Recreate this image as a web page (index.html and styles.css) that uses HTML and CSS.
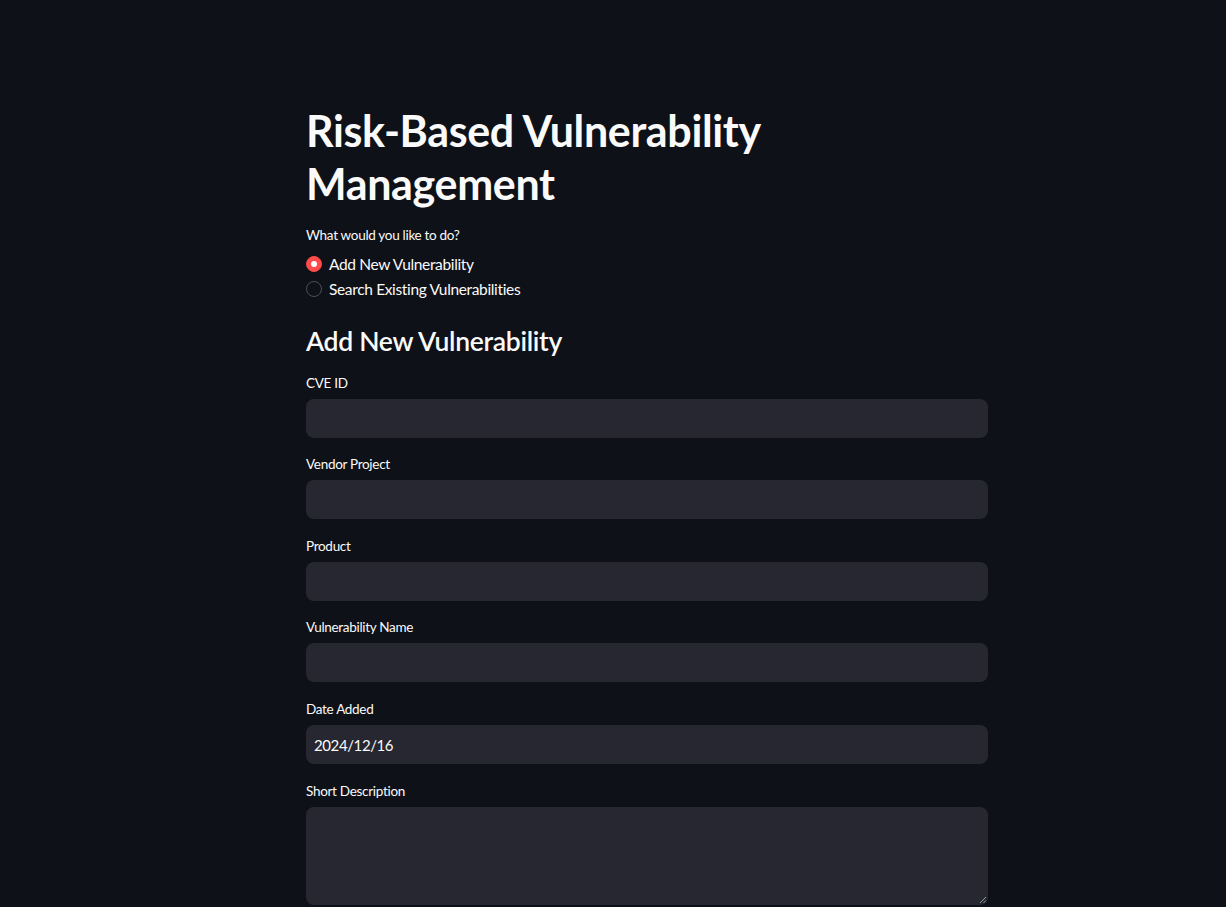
FILE: index.html
```html
<!DOCTYPE html>
<html lang="en">
<head>
<meta charset="utf-8">
<title>Risk-Based Vulnerability Management</title>
<link rel="stylesheet" href="styles.css">
</head>
<body>
<main class="app">
  <div class="block">
    <h1 class="title">Risk-Based Vulnerability Management</h1>

    <div class="radio-widget">
      <div class="label">What would you like to do?</div>
      <div class="radio-group">
        <label class="radio-option">
          <span class="radio-dot checked"></span>
          <span class="radio-text">Add New Vulnerability</span>
        </label>
        <label class="radio-option">
          <span class="radio-dot"></span>
          <span class="radio-text">Search Existing Vulnerabilities</span>
        </label>
      </div>
    </div>

    <h2 class="header">Add New Vulnerability</h2>

    <div class="field">
      <div class="label">CVE ID</div>
      <div class="input"></div>
    </div>
    <div class="field">
      <div class="label">Vendor Project</div>
      <div class="input"></div>
    </div>
    <div class="field">
      <div class="label">Product</div>
      <div class="input"></div>
    </div>
    <div class="field">
      <div class="label">Vulnerability Name</div>
      <div class="input"></div>
    </div>
    <div class="field">
      <div class="label">Date Added</div>
      <div class="input"><span class="value">2024/12/16</span></div>
    </div>
    <div class="field">
      <div class="label">Short Description</div>
      <div class="textarea">
        <svg class="grip" width="8" height="8" viewBox="0 0 8 8" aria-hidden="true">
          <path d="M7 1 L1 7 M7 4.5 L4.5 7" stroke="#9a9aa2" stroke-width="1" fill="none"/>
        </svg>
      </div>
    </div>
  </div>
</main>
</body>
</html>
```

FILE: styles.css
```css
html, body {
  margin: 0;
  padding: 0;
  background: #0e1117;
  color: #fafafa;
  font-family: "Source Sans Pro", Lato, "Noto Sans", sans-serif;
  height: 100%;
  overflow: hidden;
}

.app {
  display: flex;
  justify-content: center;
  padding-left: 68px;
  padding-top: 105px;
}

.block {
  width: 682px;
  display: flex;
  flex-direction: column;
}

.title {
  margin: 0;
  font-size: 43px;
  font-weight: 700;
  line-height: 52.8px;
  letter-spacing: -0.35px;
  width: 480px;
}

.label {
  font-size: 13.5px;
  line-height: 21px;
  letter-spacing: -0.3px;
  color: #fafafa;
}

.radio-widget {
  margin-top: 14px;
}

.radio-group {
  margin-top: 6px;
  display: flex;
  flex-direction: column;
}

.radio-option {
  display: flex;
  align-items: center;
  height: 25px;
  gap: 7px;
}

.radio-dot {
  width: 16px;
  height: 16px;
  flex: none;
  box-sizing: border-box;
  border-radius: 50%;
  border: 1px solid #4d4f59;
  background: #0e1117;
  display: flex;
  align-items: center;
  justify-content: center;
}

.radio-dot.checked {
  background: #ff4b4b;
  border-color: #ff4b4b;
}

.radio-dot.checked::after {
  content: "";
  width: 6px;
  height: 6px;
  border-radius: 50%;
  background: #ffffff;
}

.radio-text {
  font-size: 15.5px;
  line-height: 24px;
  letter-spacing: -0.35px;
}

.header {
  margin: 23.5px 0 0;
  font-size: 26.5px;
  font-weight: 600;
  line-height: 33.6px;
  letter-spacing: -0.3px;
}

.field {
  margin-top: 16.6px;
  display: flex;
  flex-direction: column;
}

.header + .field {
  margin-top: 14px;
}

.field .label {
  margin-bottom: 5px;
}

.input {
  height: 39px;
  background: #262730;
  border-radius: 8px;
  display: flex;
  align-items: center;
  padding-left: 8px;
}

.value {
  font-size: 15px;
  letter-spacing: -0.4px;
  color: #fafafa;
}

.textarea {
  height: 98px;
  background: #262730;
  border-radius: 8px;
  position: relative;
}

.grip {
  position: absolute;
  right: 1px;
  bottom: 1px;
}
```
